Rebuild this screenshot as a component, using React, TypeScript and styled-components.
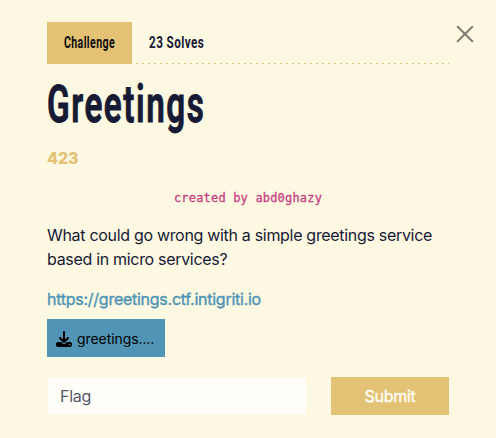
import React from "react";
import styled, { createGlobalStyle } from "styled-components";

const GlobalStyle = createGlobalStyle`
  * { box-sizing: border-box; }
  body { margin: 0; background: #fdf8e1; }
`;

const Modal = styled.main`
  position: relative;
  width: 496px;
  height: 438px;
  padding: 22px 47px 0;
  overflow: hidden;
  background: #fdf8e1;
  color: #161a35;
  font: 16px/24px Inter, sans-serif;
`;

const CloseButton = styled.button`
  position: absolute;
  top: 25px;
  right: 22px;
  width: 18px;
  height: 18px;
  padding: 0;
  border: 0;
  background: none;
  svg { display: block; }
`;

const Tabs = styled.nav`
  display: flex;
  height: 42px;
  background: repeating-linear-gradient(90deg, #e3c276 0 2px, transparent 2px 6px) 89px 41px / 313px 1px no-repeat;
`;

const Tab = styled.button<{ $active?: boolean }>`
  width: ${(p) => (p.$active ? 85 : 88)}px;
  padding: 0 0 0 17px;
  border: 0;
  background: ${(p) => (p.$active ? "#e3c276" : "transparent")};
  color: ${(p) => (p.$active ? "#0b0b0b" : "#161a35")};
  font: 700 16px/42px Roboto, sans-serif;
  letter-spacing: 0.6px;
  text-align: left;
  white-space: nowrap;
`;

const Condensed = styled.span<{ $scale: number }>`
  display: inline-block;
  transform: scaleX(${(p) => p.$scale});
  transform-origin: left center;
  white-space: nowrap;
`;

const Title = styled.h1`
  height: 80px;
  margin: 0;
  padding-top: 1px;
  font: 600 52px/80px Roboto, sans-serif;
  letter-spacing: 2.4px;
  -webkit-text-stroke: 1px #161a35;
`;

const Points = styled.div`
  height: 28px;
  color: #e3c276;
  font-weight: 800;
  letter-spacing: -0.1px;
  line-height: 28px;
`;

const Author = styled.code`
  display: block;
  margin-top: 16px;
  height: 20px;
  color: #c83f84;
  font: 12px/20px "DejaVu Sans Mono", monospace;
  letter-spacing: 0.18px;
  -webkit-text-stroke: 0.3px #c83f84;
  text-align: center;
`;

const Description = styled.p`
  margin: 15px 0 0;
  white-space: nowrap;
  letter-spacing: -0.31px;
`;

const Line = styled.span`
  display: block;
`;

const ServiceLink = styled.a`
  display: block;
  margin-top: 16px;
  color: #5095b5;
  letter-spacing: -0.26px;
  -webkit-text-stroke: 0.4px #5095b5;
`;

const Download = styled.button`
  display: flex;
  align-items: center;
  gap: 5px;
  width: 118px;
  height: 38px;
  margin-top: 8px;
  padding: 1px 9px 0;
  border: 0;
  background: #5095b5;
  color: #000;
  font: 14px/21px Inter, sans-serif;
  letter-spacing: -0.08px;
`;

const Form = styled.form`
  display: flex;
  align-items: center;
  justify-content: space-between;
  margin-top: 20px;
`;

const FlagInput = styled.input`
  width: 258px;
  height: 36px;
  margin-left: 1px;
  padding: 0 12px;
  border: 0;
  border-radius: 0;
  background: #fffef8;
  font: 16px Inter, sans-serif;
  letter-spacing: -0.3px;
  &::placeholder { color: #55586b; opacity: 1; }
`;

const Submit = styled.button`
  width: 118px;
  height: 38px;
  padding: 0;
  border: 0;
  background: #e3c276;
  color: #fffdf3;
  font: 16px Inter, sans-serif;
  letter-spacing: -0.3px;
  -webkit-text-stroke: 0.4px #fffdf3;
`;

export default function App() {
  return (
    <>
      <GlobalStyle />
      <Modal>
        <CloseButton aria-label="Close">
          <svg width="18" height="18" viewBox="0 0 18 18" stroke="#817d73" strokeWidth="2" strokeLinecap="round">
            <path d="M1.7 1.7 16.3 16.3M16.3 1.7 1.7 16.3" />
          </svg>
        </CloseButton>
        <Tabs>
          <Tab $active><Condensed $scale={0.66}>Challenge</Condensed></Tab>
          <Tab><Condensed $scale={0.73}>23 Solves</Condensed></Tab>
        </Tabs>
        <Title><Condensed $scale={0.64}>Greetings</Condensed></Title>
        <Points>423</Points>
        <Author>created by abd0ghazy</Author>
        <Description>
          <Line>What could go wrong with a simple greetings service</Line>
          <Line>based in micro services?</Line>
        </Description>
        <ServiceLink>https://greetings.ctf.intigriti.io</ServiceLink>
        <Download>
          <svg width="16" height="16" viewBox="0 0 512 512" fill="currentColor">
            <path d="M288 32c0-17.700-14.300-32-32-32s-32 14.300-32 32v242.700l-73.400-73.400c-12.500-12.500-32.800-12.500-45.300 0s-12.500 32.800 0 45.300l128 128c12.500 12.500 32.800 12.500 45.300 0l128-128c12.500-12.500 12.500-32.800 0-45.300s-32.800-12.500-45.300 0L288 274.700V32zM64 352c-35.300 0-64 28.700-64 64v32c0 35.300 28.700 64 64 64h384c35.300 0 64-28.700 64-64v-32c0-35.300-28.700-64-64-64H346.500l-45.300 45.300c-25 25-65.500 25-90.500 0L165.500 352H64zm368 56a24 24 0 1 1 0 48 24 24 0 1 1 0-48z" />
          </svg>
          <span>greetings....</span>
        </Download>
        <Form onSubmit={(e) => e.preventDefault()}>
          <FlagInput placeholder="Flag" />
          <Submit>Submit</Submit>
        </Form>
      </Modal>
    </>
  );
}
